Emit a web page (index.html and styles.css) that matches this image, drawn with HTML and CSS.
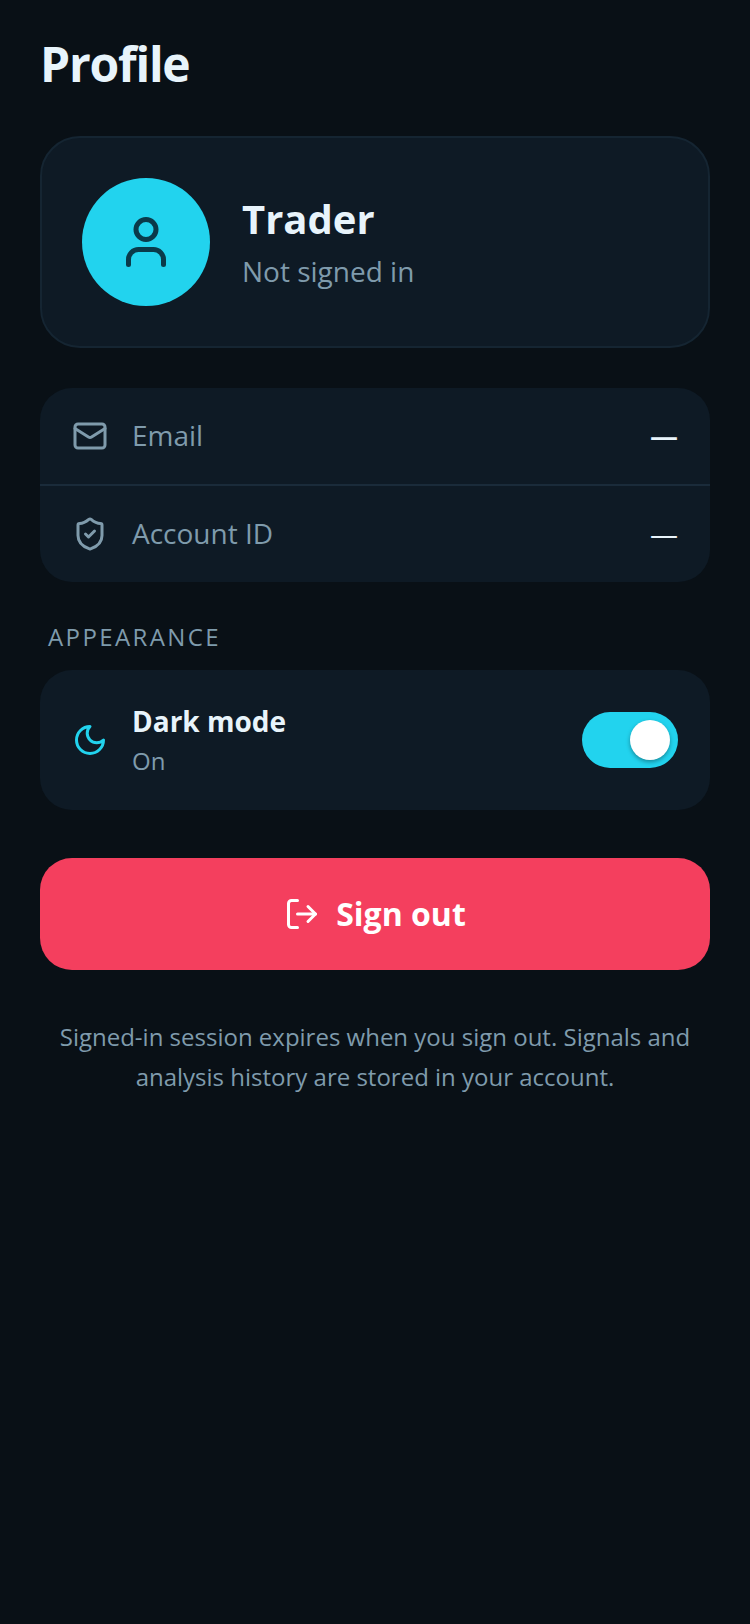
FILE: index.html
```html
<!DOCTYPE html>
<html>
  <head>
    <title>Profile</title>
    <link rel="stylesheet" href="styles.css">
  </head>
  <body>
    <div class="page">
      <h1 class="page-title">Profile</h1>

      <div class="user-card">
        <div class="avatar">
          <svg width="60" height="60" viewBox="0 0 24 24" fill="none" stroke="#0a3a4a" stroke-width="2" stroke-linecap="round" stroke-linejoin="round">
            <circle cx="12" cy="7" r="4"/>
            <path d="M5 21v-2a4 4 0 0 1 4-4h6a4 4 0 0 1 4 4v2"/>
          </svg>
        </div>
        <div class="user-info">
          <div class="user-name">Trader</div>
          <div class="user-status">Not signed in</div>
        </div>
      </div>

      <div class="panel">
        <div class="row">
          <svg class="row-icon" width="36" height="36" viewBox="0 0 24 24" fill="none" stroke="#7f9bac" stroke-width="2" stroke-linecap="round" stroke-linejoin="round">
            <rect x="2" y="4" width="20" height="16" rx="2"/>
            <path d="M22 7l-8.97 5.7a1.94 1.94 0 0 1-2.06 0L2 7"/>
          </svg>
          <span class="row-label">Email</span>
          <span class="row-value">—</span>
        </div>
        <div class="row">
          <svg class="row-icon" width="36" height="36" viewBox="0 0 24 24" fill="none" stroke="#7f9bac" stroke-width="2" stroke-linecap="round" stroke-linejoin="round">
            <path d="M20 13c0 5-3.5 7.5-7.66 8.95a1 1 0 0 1-.67-.01C7.5 20.5 4 18 4 13V6a1 1 0 0 1 1-1c2 0 4.5-1.2 6.24-2.72a1.17 1.17 0 0 1 1.52 0C14.51 3.81 17 5 19 5a1 1 0 0 1 1 1z"/>
            <path d="M9 12l2 2 4-4"/>
          </svg>
          <span class="row-label">Account ID</span>
          <span class="row-value">—</span>
        </div>
      </div>

      <div class="section-label">APPEARANCE</div>

      <div class="panel">
        <div class="row toggle-row">
          <svg class="row-icon" width="36" height="36" viewBox="0 0 24 24" fill="none" stroke="#22d3ee" stroke-width="2" stroke-linecap="round" stroke-linejoin="round">
            <path d="M12 3a6 6 0 0 0 9 9 9 9 0 1 1-9-9z"/>
          </svg>
          <div class="toggle-text">
            <div class="toggle-title">Dark mode</div>
            <div class="toggle-sub">On</div>
          </div>
          <div class="switch"><div class="knob"></div></div>
        </div>
      </div>

      <button class="signout-btn">
        <svg width="36" height="36" viewBox="0 0 24 24" fill="none" stroke="#fff" stroke-width="2" stroke-linecap="round" stroke-linejoin="round">
          <path d="M9 21H5a2 2 0 0 1-2-2V5a2 2 0 0 1 2-2h4"/>
          <path d="M16 17l5-5-5-5"/>
          <path d="M21 12H9"/>
        </svg>
        <span class="signout-text">Sign out</span>
      </button>

      <p class="footnote">Signed-in session expires when you sign out. Signals and analysis history are stored in your account.</p>
    </div>
  </body>
</html>
```

FILE: styles.css
```css
* {
  box-sizing: border-box;
}

html,
body {
  margin: 0;
  height: 100%;
}

body {
  background-color: #091016;
  font-family: "Open Sans", sans-serif;
  color: #e8f2f9;
}

.page {
  padding: 32px 40px 0;
}

.page-title {
  margin: 0 0 40px;
  font-size: 48px;
  line-height: 64px;
  font-weight: 700;
  letter-spacing: -1.2px;
  color: #e8f4fb;
}

.user-card {
  display: flex;
  align-items: center;
  gap: 32px;
  padding: 40px;
  background-color: #0e1a25;
  border: 2px solid #152532;
  border-radius: 40px;
  margin-bottom: 40px;
}

.avatar {
  width: 128px;
  height: 128px;
  border-radius: 50%;
  background-color: #22d3ee;
  display: flex;
  align-items: center;
  justify-content: center;
  flex-shrink: 0;
}

.user-name {
  font-size: 40px;
  line-height: 50px;
  font-weight: 700;
  color: #e8f4fb;
}

.user-status {
  margin-top: 8px;
  font-size: 28px;
  line-height: 38px;
  color: #7f9bac;
}

.panel {
  background-color: #0e1a25;
  border-radius: 32px;
}

.row {
  display: flex;
  align-items: center;
  padding: 0 32px;
  height: 96px;
}

.row + .row {
  height: 98px;
  border-top: 2px solid #1a2b3a;
}

.row-icon {
  flex-shrink: 0;
  margin-right: 24px;
}

.row-label {
  flex: 1;
  padding-bottom: 2px;
  font-size: 28px;
  color: #7f9bac;
}

.row-value {
  padding-bottom: 2px;
  font-size: 28px;
  font-weight: 600;
  color: #e8f4fb;
}

.row + .row .row-value {
  font-weight: 500;
}

.section-label {
  margin: 39px 0 17px;
  padding-left: 8px;
  font-size: 24px;
  line-height: 32px;
  letter-spacing: 2.4px;
  color: #7f9bac;
}

.toggle-row {
  height: 140px;
}

.toggle-text {
  flex: 1;
}

.toggle-title {
  font-size: 28px;
  line-height: 36px;
  font-weight: 700;
  color: #e8f4fb;
}

.toggle-sub {
  margin-top: 6px;
  font-size: 24px;
  line-height: 32px;
  color: #7f9bac;
}

.switch {
  width: 96px;
  height: 56px;
  border-radius: 28px;
  background-color: #22d3ee;
  padding: 8px;
  display: flex;
  justify-content: flex-end;
}

.knob {
  width: 40px;
  height: 40px;
  border-radius: 50%;
  background-color: #fff;
  box-shadow: 0 2px 4px rgba(0, 0, 0, 0.35);
}

.signout-btn {
  display: flex;
  align-items: center;
  justify-content: center;
  gap: 16px;
  width: 100%;
  height: 112px;
  margin-top: 48px;
  border: none;
  border-radius: 32px;
  background-color: #f43f5e;
  color: #fff;
  font-family: inherit;
  font-size: 32px;
  font-weight: 700;
}

.signout-text {
  padding-bottom: 2px;
}

.footnote {
  margin: 47px 0 0;
  padding: 0 8px;
  text-align: center;
  font-size: 24px;
  line-height: 40px;
  color: #7f9bac;
}
```
